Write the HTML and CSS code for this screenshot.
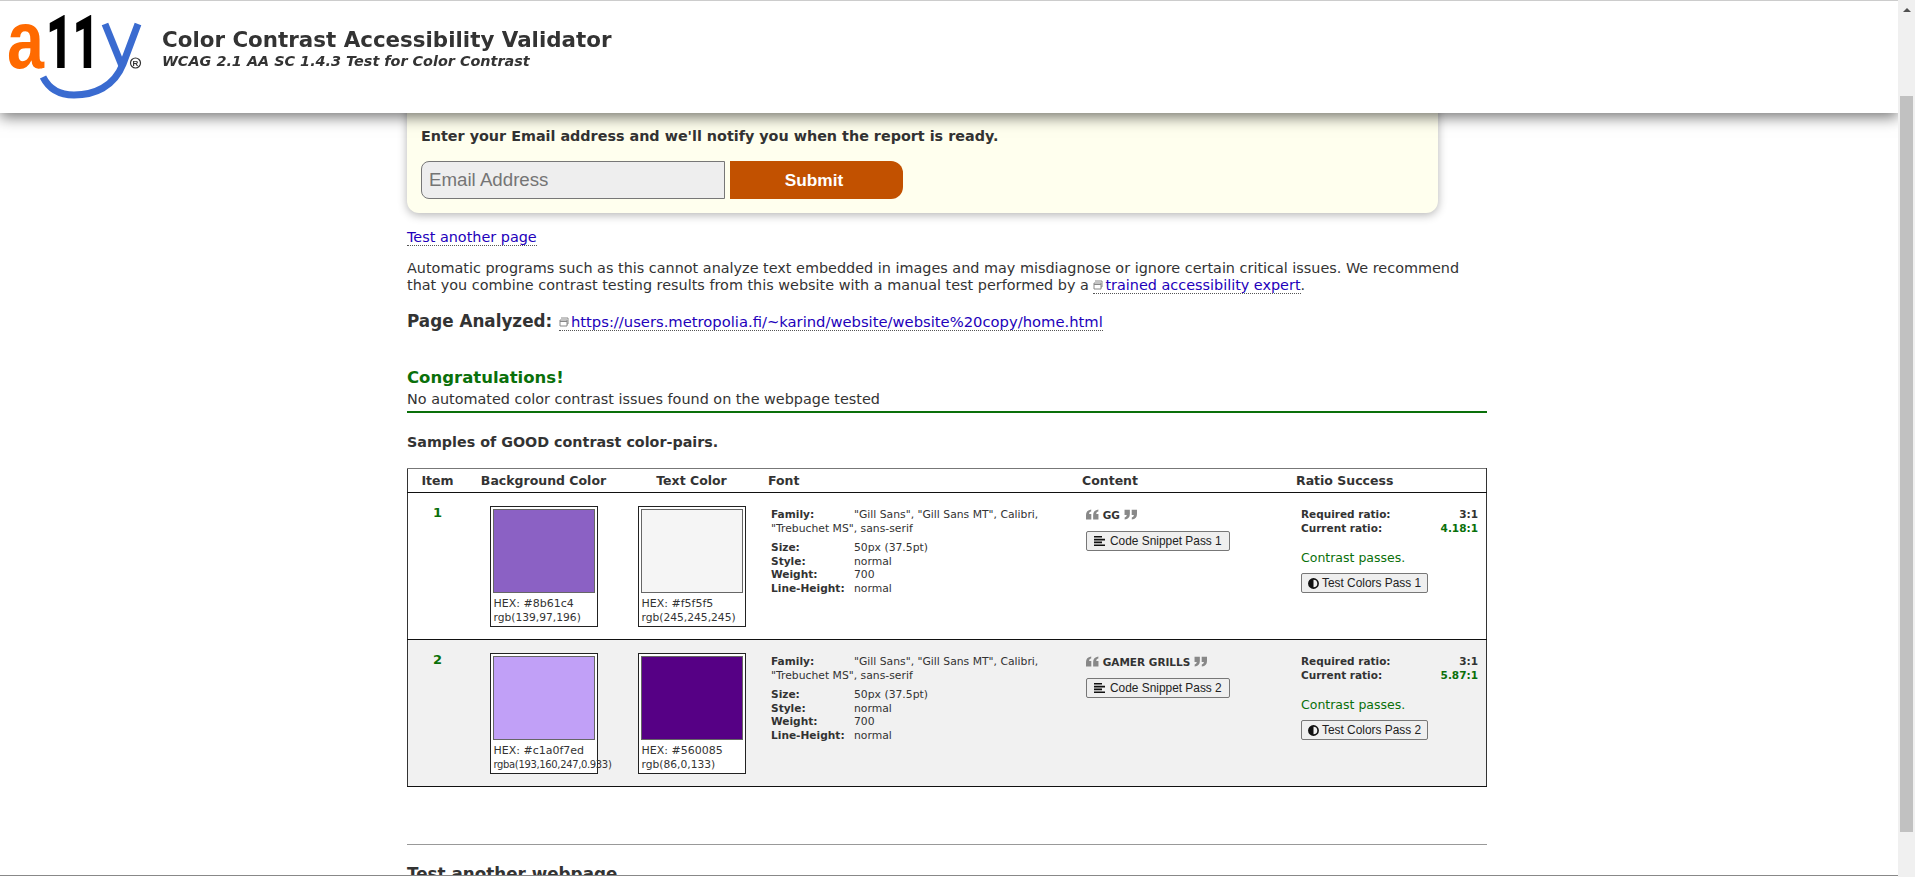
FILE: index.html
```html
<!DOCTYPE html>
<html lang="en">
<head>
    <meta charset="UTF-8">
    <title>Color Contrast Accessibility Validator</title>
    <link rel="stylesheet" href="styles.css">
</head>
<body>
    <header class="topbar">
        <svg class="logo" viewBox="0 0 145 104" width="145" height="104" aria-label="a11y logo">
            <text class="logo-a" x="7" y="67" textLength="37" lengthAdjust="spacingAndGlyphs">a</text>
            <text class="logo-one" x="46" y="67" textLength="53" lengthAdjust="spacingAndGlyphs">11</text>
            <path class="logo-y" d="M105 23 L122 65"/>
            <path class="logo-y" d="M138 23 L123 63 C114 86 94 94 74 94 C60 94 49 88 43 76"/>
            <circle class="logo-reg" cx="135.500" cy="62" r="5"/>
            <text class="logo-r" x="135.500" y="65">R</text>
        </svg>
        <div class="topbar-text">
            <h1>Color Contrast Accessibility Validator</h1>
            <p>WCAG 2.1 AA SC 1.4.3 Test for Color Contrast</p>
        </div>
    </header>

    <main class="content">
        <div class="notify">
            <p>Enter your Email address and we'll notify you when the report is ready.</p>
            <form class="notify-form">
                <input type="text" placeholder="Email Address">
                <button type="button">Submit</button>
            </form>
        </div>

        <p class="again"><a href="#">Test another page</a></p>

        <p class="intro">Automatic programs such as this cannot analyze text embedded in images and may misdiagnose or ignore certain critical issues. We recommend that you combine contrast testing results from this website with a manual test performed by a <a href="#"><svg class="ext" viewBox="0 0 10 10" width="10" height="10"><path d="M2 1h7v6h-1M1 3h7v6H1z M1 4.500h7"/></svg>trained accessibility expert</a>.</p>

        <p class="analyzed"><b>Page Analyzed:</b> <a href="#"><svg class="ext" viewBox="0 0 10 10" width="10" height="10"><path d="M2 1h7v6h-1M1 3h7v6H1z M1 4.500h7"/></svg>https://users.metropolia.fi/~karind/website/website%20copy/home.html</a></p>

        <div class="congrats">
            <h2>Congratulations!</h2>
            <p>No automated color contrast issues found on the webpage tested</p>
        </div>

        <h3 class="samples">Samples of GOOD contrast color-pairs.</h3>

        <table class="results">
            <thead>
                <tr>
                    <th class="col-item">Item</th>
                    <th class="col-bg">Background Color</th>
                    <th class="col-text">Text Color</th>
                    <th class="col-font">Font</th>
                    <th class="col-content">Content</th>
                    <th class="col-ratio">Ratio Success</th>
                </tr>
            </thead>
            <tbody>
                <tr>
                    <td class="num">1</td>
                    <td><div class="swatch"><div class="chip chip-1a"></div><span class="hex">HEX: #8b61c4</span><span class="rgb">rgb(139,97,196)</span></div></td>
                    <td><div class="swatch"><div class="chip chip-1b"></div><span class="hex">HEX: #f5f5f5</span><span class="rgb">rgb(245,245,245)</span></div></td>
                    <td>
                        <div class="font-info">
                            <p class="family"><b>Family:</b>"Gill Sans", "Gill Sans MT", Calibri, "Trebuchet MS", sans-serif</p>
                            <p><b>Size:</b>50px (37.5pt)</p>
                            <p><b>Style:</b>normal</p>
                            <p><b>Weight:</b>700</p>
                            <p><b>Line-Height:</b>normal</p>
                        </div>
                    </td>
                    <td>
                        <p class="quote">
                            <svg class="q" viewBox="0 0 12 10" width="13" height="11"><path d="M0 5.500C0 2.500 1.500.8 4.800.3v2C3.500 2.600 2.900 3.400 2.900 4.500h2v5H0zM6.600 5.500C6.600 2.500 8.100.8 11.400.3v2c-1.300.3-1.900 1.100-1.900 2.200h2v5H6.600z"/></svg>
                            GG
                            <svg class="q" viewBox="0 0 12 10" width="13" height="11"><path d="M12 4.500C12 7.500 10.500 9.200 7.200 9.700v-2c1.300-.3 1.900-1.100 1.900-2.200h-2v-5H12zM5.400 4.500C5.400 7.500 3.900 9.200.6 9.700v-2c1.300-.3 1.900-1.100 1.900-2.200h-2v-5h4.900z"/></svg>
                        </p>
                        <button class="small-btn" type="button"><svg class="i" viewBox="0 0 11 10" width="11" height="10"><path d="M0 0h8v1.600H0zM0 2.800h11v1.600H0zM0 5.600h8v1.600H0zM0 8.400h11V10H0z"/></svg>Code Snippet Pass 1</button>
                    </td>
                    <td>
                        <div class="ratio-line"><b>Required ratio:</b><b>3:1</b></div>
                        <div class="ratio-line"><b>Current ratio:</b><b class="good">4.18:1</b></div>
                        <p class="passes">Contrast passes.</p>
                        <button class="small-btn" type="button"><svg class="i i-adjust" viewBox="0 0 10 10" width="11" height="11"><circle cx="5" cy="5" r="4.200" fill="none" stroke="#111" stroke-width="1.500"/><path d="M5 .8a4.200 4.200 0 0 0 0 8.400z"/></svg>Test Colors Pass 1</button>
                    </td>
                </tr>
                <tr class="alt">
                    <td class="num">2</td>
                    <td><div class="swatch"><div class="chip chip-2a"></div><span class="hex">HEX: #c1a0f7ed</span><span class="rgb rgb-long">rgba(193,160,247,0.933)</span></div></td>
                    <td><div class="swatch"><div class="chip chip-2b"></div><span class="hex">HEX: #560085</span><span class="rgb">rgb(86,0,133)</span></div></td>
                    <td>
                        <div class="font-info">
                            <p class="family"><b>Family:</b>"Gill Sans", "Gill Sans MT", Calibri, "Trebuchet MS", sans-serif</p>
                            <p><b>Size:</b>50px (37.5pt)</p>
                            <p><b>Style:</b>normal</p>
                            <p><b>Weight:</b>700</p>
                            <p><b>Line-Height:</b>normal</p>
                        </div>
                    </td>
                    <td>
                        <p class="quote">
                            <svg class="q" viewBox="0 0 12 10" width="13" height="11"><path d="M0 5.500C0 2.500 1.500.8 4.800.3v2C3.500 2.600 2.900 3.400 2.900 4.500h2v5H0zM6.600 5.500C6.600 2.500 8.100.8 11.400.3v2c-1.300.3-1.900 1.100-1.900 2.200h2v5H6.600z"/></svg>
                            GAMER GRILLS
                            <svg class="q" viewBox="0 0 12 10" width="13" height="11"><path d="M12 4.500C12 7.500 10.500 9.200 7.200 9.700v-2c1.300-.3 1.900-1.100 1.900-2.200h-2v-5H12zM5.400 4.500C5.400 7.500 3.900 9.200.6 9.700v-2c1.300-.3 1.900-1.100 1.900-2.200h-2v-5h4.900z"/></svg>
                        </p>
                        <button class="small-btn" type="button"><svg class="i" viewBox="0 0 11 10" width="11" height="10"><path d="M0 0h8v1.600H0zM0 2.800h11v1.600H0zM0 5.600h8v1.600H0zM0 8.400h11V10H0z"/></svg>Code Snippet Pass 2</button>
                    </td>
                    <td>
                        <div class="ratio-line"><b>Required ratio:</b><b>3:1</b></div>
                        <div class="ratio-line"><b>Current ratio:</b><b class="good">5.87:1</b></div>
                        <p class="passes">Contrast passes.</p>
                        <button class="small-btn" type="button"><svg class="i i-adjust" viewBox="0 0 10 10" width="11" height="11"><circle cx="5" cy="5" r="4.200" fill="none" stroke="#111" stroke-width="1.500"/><path d="M5 .8a4.200 4.200 0 0 0 0 8.400z"/></svg>Test Colors Pass 2</button>
                    </td>
                </tr>
            </tbody>
        </table>

        <hr class="divider">
        <h2 class="another">Test another webpage</h2>
    </main>

    <!-- drawn scrollbar, the real one is hidden -->
    <div class="scrollbar">
        <span class="arrow"></span>
        <span class="thumb"></span>
    </div>
    <div class="bottom-edge"></div>
</body>
</html>
```

FILE: styles.css
```css
html, body {
    height: 100%;
    overflow: hidden;
}

body {
    margin: 0;
    background: #fff;
    color: #333;
    font-family: "DejaVu Sans", Verdana, sans-serif;
    font-size: 14.4px;
}

a {
    color: #2200bb;
    text-decoration: none;
    border-bottom: 1px dotted #555;
}

/* fixed header */
.topbar {
    position: fixed;
    top: 0;
    left: 0;
    right: 17px;
    height: 113px;
    box-sizing: border-box;
    border-top: 1px solid #ccc;
    background: #fff;
    box-shadow: 0 4px 14px rgba(0, 0, 0, 0.55);
    display: flex;
    align-items: flex-start;
    z-index: 5;
}

.logo {
    flex: none;
}

.logo-a {
    font: bold 82px "Liberation Sans", sans-serif;
    fill: #ff6a00;
}

.logo-one {
    font: 900 74px Roboto, sans-serif;
    fill: #000;
}

.logo-y {
    fill: none;
    stroke: #3a6bd0;
    stroke-width: 7;
}

.logo-reg {
    fill: none;
    stroke: #333;
    stroke-width: 1.2;
}

.logo-r {
    font: bold 8px "Liberation Sans", sans-serif;
    text-anchor: middle;
    fill: #333;
}

.topbar-text {
    margin: 27px 0 0 17px;
}

.topbar-text h1 {
    margin: 0;
    font-size: 21.4px;
    line-height: 24px;
    font-weight: bold;
    color: #333;
}

.topbar-text p {
    margin: 0;
    font-size: 14.4px;
    line-height: 19px;
    font-style: italic;
    font-weight: bold;
    color: #333;
}

/* page content */
.content {
    width: 1080px;
    margin-left: 407px;
    padding-top: 100px;
}

.notify {
    width: 1031px;
    height: 113px;
    box-sizing: border-box;
    padding: 26px 14px 0;
    background: #ffffee;
    border-radius: 0 0 12px 12px;
    box-shadow: 0 2px 10px rgba(0, 0, 0, 0.3);
}

.notify p {
    margin: 0;
    font-size: 14.35px;
    line-height: 20px;
    font-weight: bold;
}

.notify-form {
    display: flex;
    gap: 5px;
    margin-top: 15px;
}

.notify-form input {
    width: 304px;
    height: 38px;
    box-sizing: border-box;
    padding: 0 7px;
    border: 1px solid #777;
    border-radius: 8px 0 0 8px;
    background: #eee;
    font: 18.7px "Liberation Sans", sans-serif;
}

.notify-form input::placeholder {
    color: #757575;
}

.notify-form button {
    width: 173px;
    height: 38px;
    padding: 0 5px 0 0;
    border: 0;
    border-radius: 0 12px 12px 0;
    background: #c25100;
    color: #fff;
    font: bold 17.3px "Liberation Sans", sans-serif;
}

.again {
    margin: 15px 0 0;
    line-height: 19px;
}

.intro {
    margin: 13px 0 0;
    line-height: 17px;
}

.ext {
    margin-right: 2px;
    fill: none;
    stroke: #888;
    stroke-width: 1;
}

.analyzed {
    margin: 17px 0 0;
    font-size: 14.75px;
    line-height: 20px;
}

.analyzed b {
    font-size: 16.8px;
    margin-right: 2px;
}

.congrats {
    margin-top: 35px;
    padding-bottom: 2px;
    border-bottom: 2px solid #0a700a;
}

.congrats h2 {
    margin: 0;
    font-size: 16.5px;
    line-height: 22px;
    color: #0a700a;
}

.congrats p {
    margin: 0;
    line-height: 20px;
}

.samples {
    margin: 19px 0 0;
    font-size: 14.3px;
    line-height: 20px;
}

/* results table */
.results {
    width: 1080px;
    margin-top: 16px;
    table-layout: fixed;
    border-collapse: collapse;
    border: 1px solid #333;
    border-top-color: #777;
}

.results th {
    height: 23px;
    padding: 0;
    border-bottom: 1px solid #111;
    font-size: 12.5px;
    text-align: center;
}

.results td {
    height: 133px;
    padding: 13px 0 0;
    vertical-align: top;
    border-bottom: 1px solid #111;
}

.col-item { width: 59px; }
.col-bg { width: 153px; }
.col-text { width: 143px; }
.col-font { width: 314px; }
.col-content { width: 214px; }

.results .col-font,
.results .col-content,
.results .col-ratio {
    text-align: left;
    padding-left: 5px;
    box-sizing: border-box;
}

.alt td {
    background: #f1f1f1;
}

.results .num {
    padding-top: 12px;
    text-align: center;
    font-size: 13px;
    font-weight: bold;
    color: #0a700a;
}

.swatch {
    width: 108px;
    height: 121px;
    box-sizing: border-box;
    margin: 0 auto;
    padding: 2px;
    border: 1px solid #222;
    background: #fff;
    white-space: nowrap;
}

.chip {
    height: 84px;
    border: 1px solid #666;
    box-sizing: border-box;
}

.chip-1a { background: #8b61c4; }
.chip-1b { background: #f5f5f5; }
.chip-2a { background: #c1a0f7; }
.chip-2b { background: #560085; }

.hex,
.rgb {
    display: block;
    padding-left: 1px;
}

.hex { margin-top: 4px; font-size: 11px; line-height: 14px; }
.rgb { font-size: 10.7px; line-height: 13px; }
.rgb-long { font-size: 10px; letter-spacing: -0.35px; }

.font-info {
    margin: 2px 0 0 8px;
    font-size: 10.8px;
    line-height: 13.5px;
    color: #333;
}

.font-info p {
    margin: 0;
}

.font-info b {
    display: inline-block;
    width: 83px;
    font-size: 10.6px;
}

.font-info .family {
    width: 275px;
    margin-bottom: 6px;
}

.quote {
    margin: 2px 0 0 9px;
    font-size: 10.5px;
    line-height: 14px;
    font-weight: bold;
}

.q {
    fill: #888;
    vertical-align: -1px;
}

.small-btn {
    display: block;
    height: 20px;
    margin: 9px 0 0 9px;
    padding: 0 7px;
    border: 1px solid #777;
    border-radius: 2px;
    background: #efefef;
    color: #222;
    font: 11.9px "Liberation Sans", sans-serif;
    white-space: nowrap;
}

.i {
    margin-right: 5px;
    fill: #111;
    vertical-align: -1px;
}

.i-adjust {
    margin-right: 3px;
    vertical-align: -2px;
}

.ratio-line {
    display: flex;
    justify-content: space-between;
    margin: 1px 8px -1px 10px;
    font-size: 10.5px;
    line-height: 14px;
}

.good {
    color: #0a700a;
}

.passes {
    margin: 16px 0 0 10px;
    font-size: 12.5px;
    line-height: 15px;
    color: #0a700a;
}

.passes + .small-btn {
    margin: 8px 0 0 10px;
    padding: 0 6px;
}

.divider {
    margin: 57px 0 0;
    border: 0;
    border-top: 1px solid #999;
}

.another {
    margin: 18px 0 0;
    font-size: 16.8px;
    line-height: 22px;
}

/* drawn scrollbar */
.scrollbar {
    position: fixed;
    top: 0;
    right: 0;
    bottom: 0;
    width: 17px;
    background: #f0f0f0;
    z-index: 6;
}

.arrow {
    position: absolute;
    top: 8px;
    left: 5px;
    border: 4px solid transparent;
    border-top: 0;
    border-bottom: 4px solid #505050;
}

.thumb {
    position: absolute;
    top: 96px;
    left: 2px;
    right: 2px;
    bottom: 45px;
    background: #c1c1c1;
}

.bottom-edge {
    position: fixed;
    left: 0;
    right: 17px;
    bottom: 0;
    height: 1px;
    background: #fff;
    border-top: 1px solid #888;
    z-index: 7;
}
```
